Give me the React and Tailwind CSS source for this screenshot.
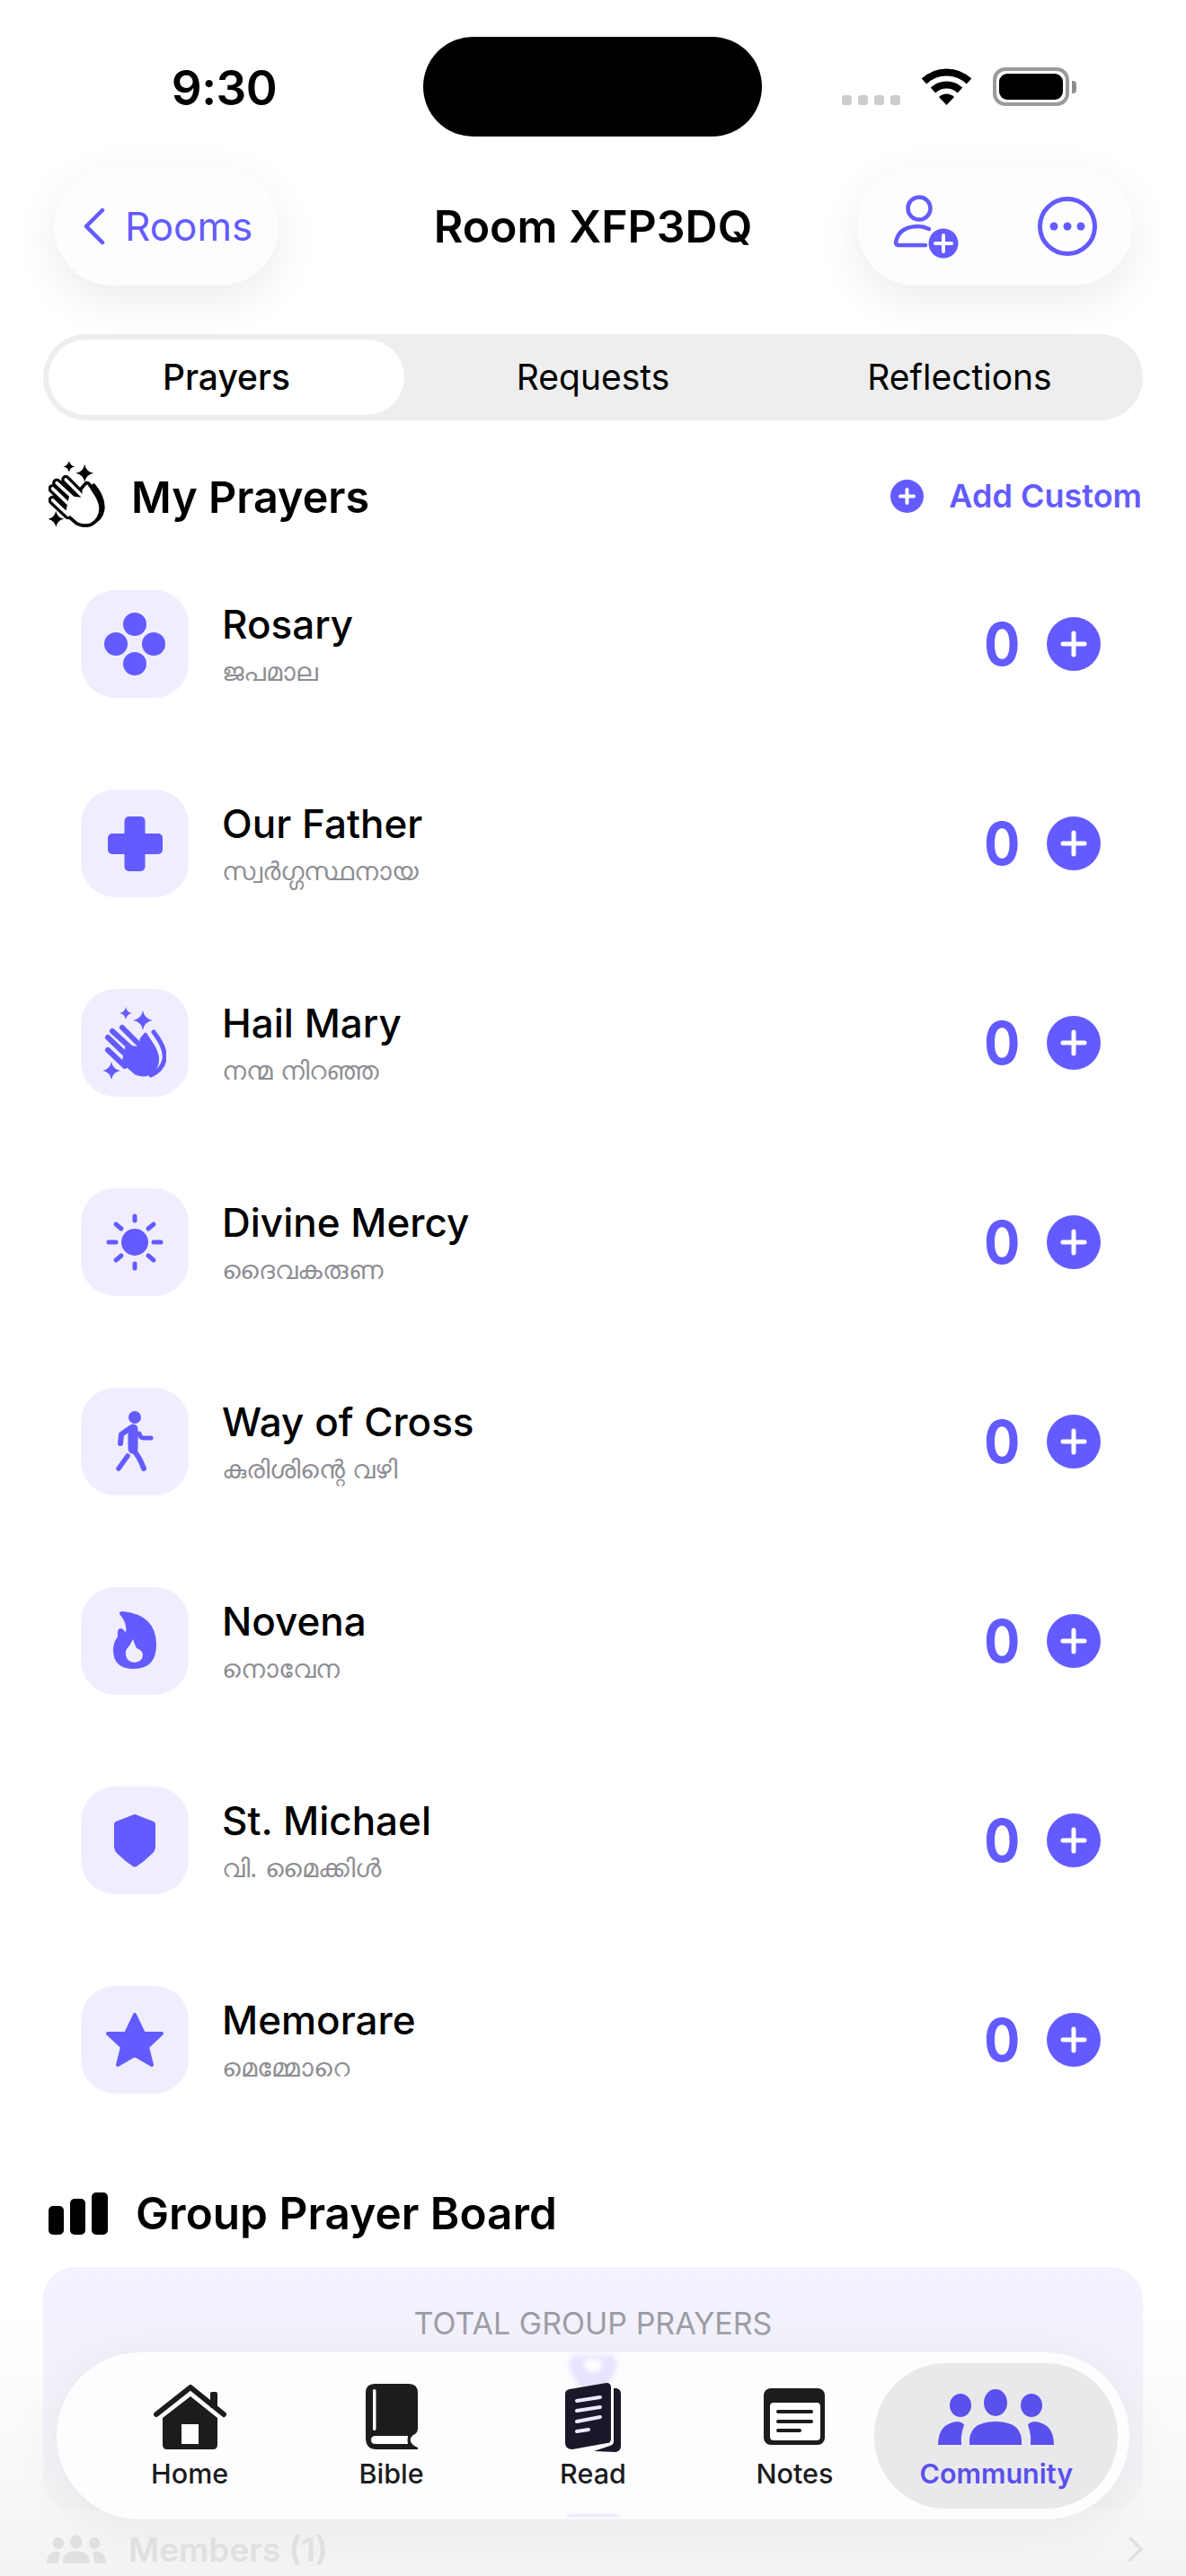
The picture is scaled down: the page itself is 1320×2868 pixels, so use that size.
import React from 'react';

const Clap = ({ outline, className }) => {
  const color = outline ? '#000000' : '#635bff';
  const fingers = [
    [5, 48, 24, 66],
    [5, 34, 28, 56],
    [10, 27, 34, 49],
    [21, 23, 42, 44],
  ];
  const palm = 'M22 62 L36 74 Q50 80 58 68 Q64 58 56 44 L47 30 L42 36 L42 46 L26 44 Z';
  const sparkle = (x, y, r) =>
    `M${x} ${y - r} Q${x + r * 0.15} ${y - r * 0.15} ${x + r} ${y} Q${x + r * 0.15} ${y + r * 0.15} ${x} ${y + r} Q${x - r * 0.15} ${y + r * 0.15} ${x - r} ${y} Q${x - r * 0.15} ${y - r * 0.15} ${x} ${y - r}Z`;
  return (
    <svg viewBox="0 0 70 81" className={className}>
      <path d={sparkle(44, 15, 11)} fill={color} />
      <path d={sparkle(25, 7, 7)} fill={color} />
      <path d={sparkle(9, 71, 10)} fill={color} />
      {outline ? (
        <g fill="none" strokeLinecap="round" strokeLinejoin="round">
          <path d="M55 30 Q68 46 66 60 Q64 72 50 77" stroke="#000" strokeWidth="4.5" />
          <path d={palm} fill="#000" stroke="#000" strokeWidth="10" />
          {fingers.map((f, i) => (
            <line key={i} x1={f[0]} y1={f[1]} x2={f[2]} y2={f[3]} stroke="#000" strokeWidth="11" />
          ))}
          <path d={palm} fill="#fff" stroke="#fff" strokeWidth="2" />
          {fingers.map((f, i) => (
            <line key={i} x1={f[0]} y1={f[1]} x2={f[2]} y2={f[3]} stroke="#fff" strokeWidth="4" />
          ))}
        </g>
      ) : (
        <g strokeLinecap="round" strokeLinejoin="round">
          <path d="M56 28 Q70 46 68 58 Q66 70 53 76" fill="none" stroke={color} strokeWidth="5" />
          <path d={palm} fill={color} stroke={color} strokeWidth="3" />
          {fingers.map((f, i) => (
            <line key={i} x1={f[0]} y1={f[1]} x2={f[2]} y2={f[3]} stroke={color} strokeWidth="6" />
          ))}
        </g>
      )}
    </svg>
  );
};

const RosaryIcon = () => (
  <svg viewBox="0 0 120 120" className="w-[120px] h-[120px]" fill="#635bff">
    <circle cx="60" cy="38" r="13" />
    <circle cx="39" cy="60" r="13" />
    <circle cx="81" cy="60" r="13" />
    <circle cx="60" cy="82" r="13" />
  </svg>
);

const CrossIcon = () => (
  <svg viewBox="0 0 120 120" className="w-[120px] h-[120px]" fill="#635bff">
    <rect x="48.5" y="30" width="23" height="61" rx="5" />
    <rect x="30" y="49" width="61" height="23" rx="5" />
  </svg>
);

const SunIcon = () => (
  <svg viewBox="0 0 120 120" className="w-[120px] h-[120px]" stroke="#635bff" strokeWidth="5" strokeLinecap="round">
    <circle cx="60" cy="60" r="15" fill="#635bff" stroke="none" />
    <line x1="60" y1="31" x2="60" y2="36" />
    <line x1="60" y1="84" x2="60" y2="89" />
    <line x1="31" y1="60" x2="39" y2="60" />
    <line x1="81" y1="60" x2="89" y2="60" />
    <line x1="39" y1="40" x2="45" y2="45" />
    <line x1="81" y1="40" x2="75" y2="45" />
    <line x1="39" y1="80" x2="45" y2="75" />
    <line x1="81" y1="80" x2="75" y2="75" />
  </svg>
);

const WalkIcon = () => (
  <svg viewBox="0 0 120 120" className="w-[120px] h-[120px]" fill="none" stroke="#635bff" strokeLinecap="round" strokeLinejoin="round">
    <circle cx="60" cy="33" r="7" fill="#635bff" stroke="none" />
    <path d="M58 46 L58 68" strokeWidth="11" />
    <path d="M44 62 L45 52 L55 45" strokeWidth="6" />
    <path d="M65 51 Q66 56 70 56 L78 56" strokeWidth="5" />
    <path d="M52 76 L42 90" strokeWidth="5.5" />
    <path d="M57 68 Q65 76 70 90" strokeWidth="6" />
  </svg>
);

const FlameIcon = () => (
  <svg viewBox="0 0 120 120" className="w-[120px] h-[120px]">
    <path
      fillRule="evenodd"
      fill="#635bff"
      d="M43 30 Q42 27 47 27 Q84 31 84 64 Q84 91 59 91 Q36 91 36 70 Q36 62 41 55 Q40 46 44 46 Q47 46 50 51 Q52 40 43 30Z M58 58 Q55 65 51 69 Q49 72 50 76 Q52 84 60 84 Q69 83 69 75 Q68 70 62 68 Q60 64 58 58Z"
    />
  </svg>
);

const ShieldIcon = () => (
  <svg viewBox="0 0 120 120" className="w-[120px] h-[120px]" fill="#635bff">
    <path d="M60 31 Q61 31 63 32 L81 39 Q83 40 83 42 L83 67 Q83 72 78 76 Q70 84 62 89 Q60 90 58 89 Q50 84 42 76 Q37 72 37 67 L37 42 Q37 40 39 39 L57 32 Q59 31 60 31Z" />
  </svg>
);

const StarIcon = () => (
  <svg viewBox="0 0 120 120" className="w-[120px] h-[120px]">
    <path d="M60 32 L70 53 L90 53 L74 68 L79 88 L60 77 L41 88 L46 68 L30 53 L50 53 Z" fill="#635bff" stroke="#635bff" strokeWidth="4" strokeLinejoin="round" />
  </svg>
);

const prayers = [
  { name: 'Rosary', sub: 'ജപമാല', icon: <RosaryIcon /> },
  { name: 'Our Father', sub: 'സ്വർഗ്ഗസ്ഥനായ', icon: <CrossIcon /> },
  { name: 'Hail Mary', sub: 'നന്മ നിറഞ്ഞ', icon: <Clap className="w-[70px] h-[81px]" /> },
  { name: 'Divine Mercy', sub: 'ദൈവകരുണ', icon: <SunIcon /> },
  { name: 'Way of Cross', sub: 'കുരിശിന്റെ വഴി', icon: <WalkIcon /> },
  { name: 'Novena', sub: 'നൊവേന', icon: <FlameIcon /> },
  { name: 'St. Michael', sub: 'വി. മൈക്കിൾ', icon: <ShieldIcon /> },
  { name: 'Memorare', sub: 'മെമ്മോറെ', icon: <StarIcon /> },
];

const HomeIcon = () => (
  <svg viewBox="0 0 81 72" className="w-[81px] h-[72px]">
    <rect x="63" y="8" width="8" height="18" rx="2" fill="#1c1c1e" />
    <path d="M3 33 L41 3 L78 33" fill="none" stroke="#1c1c1e" strokeWidth="6" strokeLinecap="round" strokeLinejoin="round" />
    <path fillRule="evenodd" fill="#1c1c1e" d="M41 13 L71 37 L71 67 Q71 72 66 72 L15 72 Q10 72 10 67 L10 37 Z M31 44 L31 66 L50 66 L50 44 Z" />
  </svg>
);

const BibleIcon = () => (
  <svg viewBox="0 0 58 73" className="w-[58px] h-[73px]">
    <path fill="#1c1c1e" d="M10 0 H48 Q58 0 58 10 V50 Q58 55 53 57 Q49 60 50 64 Q51 68 58 71 V73 H12 Q0 73 0 60 V10 Q0 0 10 0Z" />
    <rect x="8" y="6" width="3.5" height="46" rx="1.7" fill="#fff" />
    <path fill="#fff" d="M11 58 H47 Q46 63 47 67 H11 Q6 67 6 62.5 Q6 58 11 58Z" />
  </svg>
);

const ReadIcon = () => (
  <svg viewBox="0 0 62 78" className="w-[62px] h-[78px]">
    <path fill="#1a1728" d="M57 6 Q62 7 62 12 V70 Q62 76 56 77 L32 76 L50 70 Q54 69 54 65 V6 Z" />
    <path fill="#1a1728" d="M5 7 L46 0 Q51 0 51 5 V62 Q51 67 47 67 L8 74 Q0 74 0 66 V12 Q0 8 5 7Z" />
    <g stroke="#ebe9ff" strokeWidth="4" strokeLinecap="round">
      <line x1="13" y1="20" x2="39" y2="16" />
      <line x1="13" y1="31" x2="39" y2="27" />
      <line x1="13" y1="43" x2="39" y2="38" />
      <line x1="13" y1="54" x2="26" y2="52" />
    </g>
  </svg>
);

const NotesIcon = () => (
  <svg viewBox="0 0 68 63" className="w-[68px] h-[63px]">
    <rect width="68" height="63" rx="8" fill="#1c1c1e" />
    <rect x="7" y="16" width="56" height="42" rx="4" fill="#fff" />
    <g stroke="#1c1c1e" strokeWidth="4" strokeLinecap="round">
      <line x1="16" y1="26" x2="53" y2="26" />
      <line x1="16" y1="37" x2="53" y2="37" />
      <line x1="16" y1="47" x2="40" y2="47" />
    </g>
  </svg>
);

const GroupIcon = ({ color, className }) => (
  <svg viewBox="0 0 129 62" className={className} fill={color}>
    <ellipse cx="64" cy="15" rx="13" ry="15" />
    <ellipse cx="25" cy="18" rx="12" ry="13" />
    <ellipse cx="104" cy="18" rx="12" ry="13" />
    <path d="M35 62 Q33 36 64 36 Q95 36 93 62Z" />
    <path d="M0 62 Q0 38 22 36 Q28 37 29 40 Q25 50 26 62Z" />
    <path d="M129 62 Q129 38 107 36 Q101 37 100 40 Q104 50 103 62Z" />
  </svg>
);

const navItems = [
  { label: 'Home', icon: <HomeIcon />, top: 'mt-[24px]' },
  { label: 'Bible', icon: <BibleIcon />, top: 'mt-[23px]' },
  { label: 'Read', icon: <ReadIcon />, top: 'mt-[22px]' },
  { label: 'Notes', icon: <NotesIcon />, top: 'mt-[28px]' },
];

const App = () => {
  return (
    <div className="relative w-[1320px] h-[2868px] overflow-hidden bg-white text-black [font-family:Inter,sans-serif]">
      {/* status bar */}
      <div className="flex h-[186px] pt-[41px]">
        <div className="w-[471px] h-[111px] flex items-center justify-center">
          <span className="text-[53px] font-semibold leading-none mr-[-28px] mt-[4px] tracking-[-0.5px]">9:30</span>
        </div>
        <div className="w-[377px] h-[111px] rounded-full bg-black" />
        <div className="flex-1 h-[111px] flex items-start pl-[89px]">
          <div className="flex gap-[7px] mt-[65px]">
            <div className="w-[11px] h-[11px] rounded-[3px] bg-[#cccccc]" />
            <div className="w-[11px] h-[11px] rounded-[3px] bg-[#cccccc]" />
            <div className="w-[11px] h-[11px] rounded-[3px] bg-[#cccccc]" />
            <div className="w-[11px] h-[11px] rounded-[3px] bg-[#cccccc]" />
          </div>
          <svg viewBox="0 0 57 42" className="w-[57px] h-[42px] ml-[23px] mt-[34px]">
            <path d="M3.5 15.5 A36 36 0 0 1 53.5 15.5" fill="none" stroke="#000" strokeWidth="8" />
            <path d="M13.5 25.5 A22 22 0 0 1 43.5 25.5" fill="none" stroke="#000" strokeWidth="8" />
            <path d="M28.5 42 L20 33 A12 12 0 0 1 37 33 Z" fill="#000" />
          </svg>
          <div className="ml-[23px] mt-[34px] w-[85px] h-[43px] rounded-[14px] border-[4px] border-[#9a9a9a] p-[3px]">
            <div className="w-full h-full rounded-[9px] bg-black" />
          </div>
          <div className="ml-[3px] mt-[49px] w-[5px] h-[14px] rounded-r-[4px] bg-[#8e8e8e]" />
        </div>
      </div>

      {/* header */}
      <div className="grid grid-cols-[306px_1fr_306px] items-center px-[60px] h-[132px]">
        <div className="w-[250px] h-[132px] rounded-full bg-[#fdfdfd] shadow-[0_16px_50px_rgba(0,0,0,0.08)] flex items-center pl-[32px] gap-[21px]">
          <svg viewBox="0 0 26 42" className="w-[26px] h-[42px]" fill="none" stroke="#635bff" strokeWidth="4.5" strokeLinecap="round" strokeLinejoin="round">
            <path d="M22 3 L4 21 L22 39" />
          </svg>
          <span className="text-[44px] text-[#635bff] leading-none">Rooms</span>
        </div>
        <div className="text-center text-[50px] font-semibold leading-none">Room XFP3DQ</div>
        <div className="w-[306px] h-[132px] rounded-full bg-[#fdfdfd] shadow-[0_16px_50px_rgba(0,0,0,0.08)] flex items-center justify-between pl-[40px] pr-[39px]">
          <svg viewBox="0 0 73 72" className="w-[73px] h-[72px]" fill="none" stroke="#635bff" strokeWidth="4.5">
            <circle cx="29" cy="16" r="12.5" />
            <path d="M40 39 Q34 36 28 36 Q6 36 3 54 Q3 57 7 57 L36 57" strokeLinecap="round" />
            <circle cx="56" cy="55" r="16.5" fill="#635bff" stroke="none" />
            <path d="M56 46 V64 M47 55 H65" stroke="#fff" strokeWidth="4" strokeLinecap="round" />
          </svg>
          <svg viewBox="0 0 66 66" className="w-[66px] h-[66px]">
            <circle cx="33" cy="33" r="30.5" fill="none" stroke="#635bff" strokeWidth="5" />
            <circle cx="18" cy="33" r="4.5" fill="#635bff" />
            <circle cx="33" cy="33" r="4.5" fill="#635bff" />
            <circle cx="48" cy="33" r="4.5" fill="#635bff" />
          </svg>
        </div>
      </div>

      {/* tabs */}
      <div className="mx-[48px] mt-[54px] h-[96px] rounded-full bg-[#eeeeee] grid grid-cols-3 text-[39px]">
        <div className="m-[6px] rounded-full bg-white flex items-center justify-center font-medium">Prayers</div>
        <div className="flex items-center justify-center">Requests</div>
        <div className="flex items-center justify-center">Reflections</div>
      </div>

      {/* my prayers */}
      <div className="mt-[42px] pl-[54px] pr-[49px] h-[80px] flex items-center justify-between">
        <div className="flex items-center gap-[28px]">
          <Clap outline className="w-[64px] h-[74px]" />
          <span className="text-[48.5px] font-semibold leading-none mt-[8px]">My Prayers</span>
        </div>
        <div className="flex items-center gap-[28px] mt-[4px]">
          <svg viewBox="0 0 37 37" className="w-[37px] h-[37px]">
            <circle cx="18.5" cy="18.5" r="18.5" fill="#635bff" />
            <path d="M18.5 11 V26 M11 18.5 H26" stroke="#fff" strokeWidth="4" strokeLinecap="round" />
          </svg>
          <span className="text-[36px] font-semibold text-[#635bff] leading-none">Add Custom</span>
        </div>
      </div>

      <div className="mt-[16px]">
        {prayers.map((p) => (
          <div key={p.name} className="h-[222px] flex items-center pl-[90px] pr-[95px]">
            <div className="w-[120px] h-[120px] rounded-[38px] bg-[#f0eefe] flex items-center justify-center shrink-0">{p.icon}</div>
            <div className="ml-[37px] flex-1">
              <div className="text-[44px] font-medium leading-[52px]">{p.name}</div>
              <div className="text-[29px] text-[#8e8e93] leading-[36px] mt-[9px] [font-family:Inter,'Noto_Sans',sans-serif]">{p.sub}</div>
            </div>
            <span className="text-[66px] font-bold text-[#635bff] leading-none scale-x-[0.9]">0</span>
            <div className="ml-[27px] w-[60px] h-[60px] rounded-full bg-[#635bff] flex items-center justify-center">
              <svg viewBox="0 0 30 30" className="w-[30px] h-[30px]">
                <path d="M15 3 V27 M3 15 H27" stroke="#fff" strokeWidth="5" strokeLinecap="round" />
              </svg>
            </div>
          </div>
        ))}
      </div>

      {/* group prayer board */}
      <div className="mt-[59px] h-[47px] pl-[54px] flex items-center gap-[31px]">
        <div className="flex items-end gap-[7px] h-[47px]">
          <div className="w-[17px] h-[32px] rounded-[5px] bg-black" />
          <div className="w-[17px] h-[40px] rounded-[5px] bg-black" />
          <div className="w-[18px] h-[47px] rounded-[5px] bg-black" />
        </div>
        <span className="text-[49.5px] font-semibold leading-none">Group Prayer Board</span>
      </div>
      <div className="mx-[48px] mt-[36px] h-[270px] rounded-[36px] bg-gradient-to-b from-[#f4f2fe] to-[#eeedfa] pt-[46px] text-center text-[34px] text-[#97979f] leading-none">
        TOTAL GROUP PRAYERS
      </div>
      <div className="relative z-10 mt-[23px] pl-[52px] pr-[48px] flex items-center">
        <GroupIcon color="#e0e0e0" className="w-[66px] h-[42px]" />
        <span className="ml-[25px] text-[37px] font-semibold text-[#e0e0e0] leading-none">Members (1)</span>
        <svg viewBox="0 0 16 28" className="ml-auto w-[16px] h-[28px]" fill="none" stroke="#e0e0e0" strokeWidth="3.5" strokeLinecap="round">
          <path d="M2 2 L14 14 L2 26" />
        </svg>
      </div>

      {/* bottom fade + floating nav */}
      <div className="absolute inset-x-0 bottom-0 h-[300px] bg-gradient-to-b from-white/0 via-[#f6f6f6]/70 via-60% to-[#f3f3f3]" />
      <div className="absolute left-[63px] top-[2619px] w-[1194px] h-[186px] rounded-full bg-[#fdfdff] shadow-[0_10px_60px_rgba(0,0,0,0.06)] grid grid-cols-5 px-[36px] py-[12px] overflow-hidden">
        <svg viewBox="0 0 60 44" className="absolute left-[567px] top-[3px] w-[60px] h-[44px] blur-[2.5px]">
          <path fillRule="evenodd" fill="#e6e4ff" d="M8 0 H52 Q60 8 54 20 Q46 32 42 44 H18 Q14 32 6 20 Q0 8 8 0Z M30 4 Q18 4 20 12 Q24 20 30 20 Q36 20 40 12 Q42 4 30 4Z" />
        </svg>
        <div className="absolute left-[567px] bottom-0 w-[60px] h-[6px] rounded-t-full border-t-[3px] border-[#e9e7ff] blur-[1px]" />
        {navItems.map((n) => (
          <div key={n.label} className="relative flex flex-col items-center">
            <div className={n.top}>{n.icon}</div>
            <span className="absolute top-[108px] text-[30.5px] font-medium text-[#1c1c1e] leading-none">{n.label}</span>
          </div>
        ))}
        <div className="relative flex flex-col items-center">
          <div className="absolute -left-[24px] -right-[23px] inset-y-0 rounded-[80px] bg-[#e9e9eb]" />
          <GroupIcon color="#5a50ec" className="relative mt-[29px] w-[129px] h-[62px]" />
          <span className="absolute top-[108px] text-[30.5px] font-semibold text-[#5a50ec] leading-none">Community</span>
        </div>
      </div>
    </div>
  );
};

export default App;
